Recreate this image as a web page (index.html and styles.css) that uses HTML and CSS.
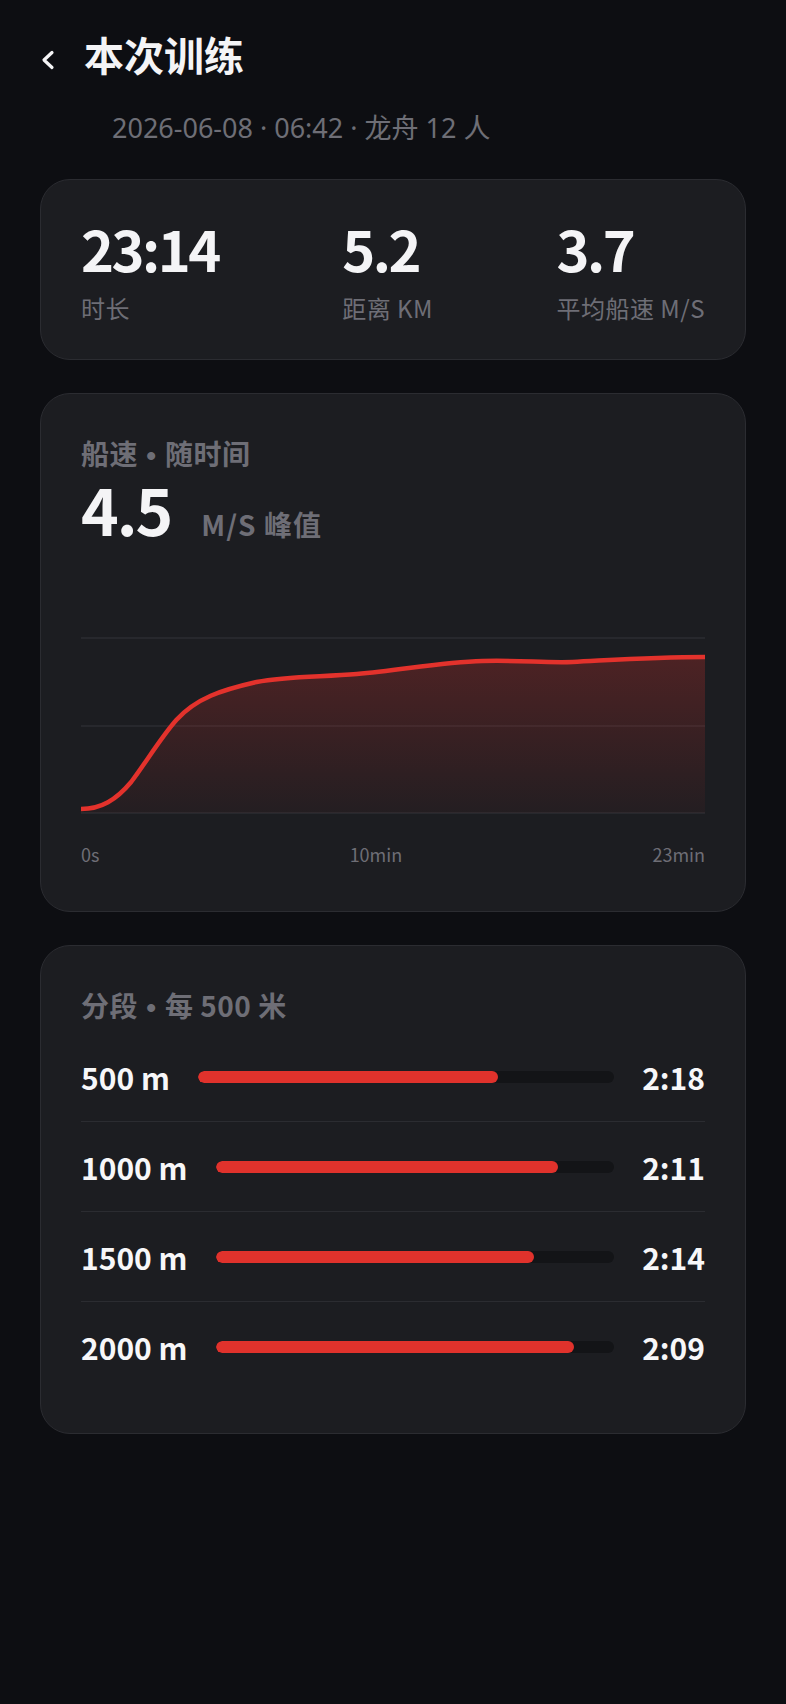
FILE: index.html
```html
<!DOCTYPE html>
<html lang="zh-CN">
<head>
    <meta charset="UTF-8">
    <meta name="viewport" content="width=device-width, initial-scale=1.0">
    <title>本次训练</title>
    <link rel="stylesheet" href="styles.css">
</head>
<body>
    <div class="page">
        <header class="top">
            <a class="back" href="#">
                <svg width="20" height="48" viewBox="0 0 20 48">
                    <polyline points="12,22.5 4,30 12,37.5" fill="none" stroke="#f4f4f6" stroke-width="3.2" stroke-linecap="round" stroke-linejoin="round"/>
                </svg>
            </a>
            <h1>本次训练</h1>
        </header>
        <div class="meta">2026-06-08 · 06:42 · 龙舟 12 人</div>

        <!-- 总览 -->
        <section class="card stats">
            <div class="stat">
                <div class="stat-value">23:14</div>
                <div class="stat-label">时长</div>
            </div>
            <div class="stat">
                <div class="stat-value">5.2</div>
                <div class="stat-label">距离 KM</div>
            </div>
            <div class="stat">
                <div class="stat-value">3.7</div>
                <div class="stat-label">平均船速 M/S</div>
            </div>
        </section>

        <!-- 船速曲线 -->
        <section class="card speed">
            <h2 class="card-title">船速<span class="dot"> • </span>随时间</h2>
            <div class="peak">
                <span class="peak-value">4.5</span>
                <span class="peak-unit">M/S 峰值</span>
            </div>
            <svg class="chart" viewBox="0 0 622 186" preserveAspectRatio="none">
                <defs>
                    <linearGradient id="area" x1="0" y1="0" x2="0" y2="1">
                        <stop offset="0" stop-color="#e0322c" stop-opacity="0.25"/>
                        <stop offset="1" stop-color="#e0322c" stop-opacity="0.04"/>
                    </linearGradient>
                </defs>
                <line class="grid" x1="0" y1="6" x2="622" y2="6"/>
                <line class="grid" x1="0" y1="94" x2="622" y2="94"/>
                <line class="grid" x1="0" y1="181" x2="622" y2="181"/>
                <path fill="url(#area)" d="M0,177 C20,177 35,168 50,150 C65,130 80,105 95,88 C115,66 140,58 175,50 C205,44 240,45 275,42 C320,38 360,30 400,29 C440,28 460,31 490,30 C530,28 570,25 622,25 L622,181 L0,181 Z"/>
                <path class="line" d="M0,177 C20,177 35,168 50,150 C65,130 80,105 95,88 C115,66 140,58 175,50 C205,44 240,45 275,42 C320,38 360,30 400,29 C440,28 460,31 490,30 C530,28 570,25 622,25"/>
            </svg>
            <div class="axis">
                <span>0s</span>
                <span>10min</span>
                <span>23min</span>
            </div>
        </section>

        <!-- 分段 -->
        <section class="card splits">
            <h2 class="card-title">分段<span class="dot"> • </span>每 500 米</h2>
            <ul class="split-list">
                <li>
                    <span class="split-dist">500 m</span>
                    <span class="track"><span class="fill" style="width: 72%"></span></span>
                    <span class="split-time">2:18</span>
                </li>
                <li>
                    <span class="split-dist">1000 m</span>
                    <span class="track"><span class="fill" style="width: 86%"></span></span>
                    <span class="split-time">2:11</span>
                </li>
                <li>
                    <span class="split-dist">1500 m</span>
                    <span class="track"><span class="fill" style="width: 80%"></span></span>
                    <span class="split-time">2:14</span>
                </li>
                <li>
                    <span class="split-dist">2000 m</span>
                    <span class="track"><span class="fill" style="width: 90%"></span></span>
                    <span class="split-time">2:09</span>
                </li>
            </ul>
        </section>
    </div>
</body>
</html>
```

FILE: styles.css
```css
body {
    margin: 0;
    padding: 0;
    background-color: #0d0e12;
    color: #f4f4f6;
    font-family: "Noto Sans CJK SC", "Noto Sans", sans-serif;
}
.page {
    padding: 30px 40px 60px;
}
.top {
    display: flex;
    align-items: flex-start;
}
.back {
    display: block;
    width: 44px;
    height: 48px;
}
.back svg {
    display: block;
}
h1 {
    margin: 0;
    font-size: 40px;
    line-height: 48px;
    font-weight: 700;
}
.meta {
    margin: 32px 0 0 72px;
    font-family: "Noto Sans", "Noto Sans CJK SC", sans-serif;
    font-size: 27px;
    line-height: 36px;
    color: #6e6e76;
}
.card {
    margin-top: 33px;
    padding: 40px 40px 44px;
    background-color: #1c1d21;
    border: 1px solid #2b2c31;
    border-radius: 30px;
}
.stats {
    display: flex;
    justify-content: space-between;
    padding-bottom: 34px;
}
.stat-value {
    font-size: 56px;
    line-height: 56px;
    font-weight: 700;
    letter-spacing: -2.5px;
}
.stat-label {
    margin-top: 15px;
    font-size: 24px;
    line-height: 34px;
    letter-spacing: 0.5px;
    color: #6e6e76;
}
.card-title {
    margin: 0;
    font-size: 28px;
    line-height: 39px;
    font-weight: 700;
    letter-spacing: 0.5px;
    color: #6e6e76;
}
.card-title .dot {
    font-family: "Liberation Sans", sans-serif;
    line-height: 1;
}
.peak {
    display: flex;
    align-items: baseline;
    gap: 30px;
}
.peak-value {
    font-size: 64px;
    line-height: 70px;
    font-weight: 700;
    letter-spacing: -2px;
}
.peak-unit {
    font-size: 28px;
    font-weight: 700;
    letter-spacing: 1px;
    color: #6e6e76;
}
.chart {
    display: block;
    width: 100%;
    height: 186px;
    margin-top: 88px;
}
.chart .grid {
    stroke: #27282d;
    stroke-width: 2;
}
.chart .line {
    fill: none;
    stroke: #e3322c;
    stroke-width: 4.5;
    stroke-linecap: round;
}
.axis {
    display: flex;
    justify-content: space-between;
    margin-top: 24px;
    font-size: 18px;
    line-height: 25px;
    color: #6e6e76;
}
.splits {
    padding-bottom: 41px;
}
.split-list {
    list-style: none;
    margin: 7px 0 0;
    padding: 0;
}
.split-list li {
    display: flex;
    align-items: center;
    gap: 28px;
    box-sizing: border-box;
    height: 90px;
    border-bottom: 1px solid #2b2c31;
}
.split-list li:last-child {
    border-bottom: none;
}
.split-dist,
.split-time {
    font-size: 30px;
    font-weight: 700;
    color: #f7f7f9;
}
.split-time {
    flex: 0 0 60px;
}
.track {
    flex: 1;
    height: 12px;
    border-radius: 6px;
    background-color: #131417;
    overflow: hidden;
}
.fill {
    display: block;
    height: 100%;
    border-radius: 6px;
    background-color: #e0322c;
}
```
